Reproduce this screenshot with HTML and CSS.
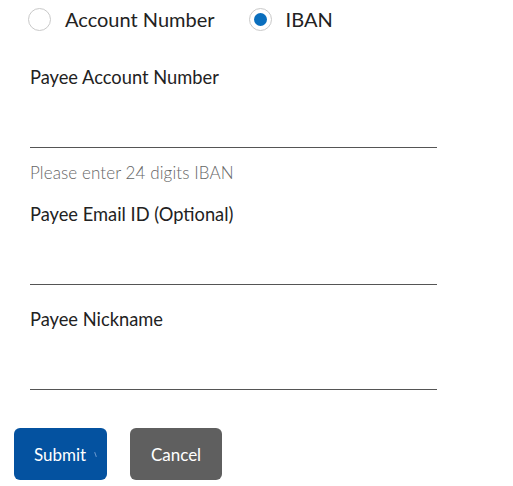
FILE: index.html
```html
<!DOCTYPE html>
<html lang="en">
<head>
<meta charset="utf-8">
<title>Add Payee</title>
<link rel="stylesheet" href="styles.css">
</head>
<body>
<form class="payee-form">
  <div class="radio-group">
    <label class="radio-option">
      <span class="radio"></span>
      <span class="radio-text">Account Number</span>
    </label>
    <label class="radio-option">
      <span class="radio radio-checked"><span class="radio-dot"></span></span>
      <span class="radio-text">IBAN</span>
    </label>
  </div>

  <div class="field field-first">
    <div class="field-label">Payee Account Number</div>
    <div class="field-input"></div>
    <div class="field-hint">Please enter 24 digits IBAN</div>
  </div>

  <div class="field field-second">
    <div class="field-label">Payee Email ID (Optional)</div>
    <div class="field-input"></div>
  </div>

  <div class="field field-third">
    <div class="field-label">Payee Nickname</div>
    <div class="field-input"></div>
  </div>

  <div class="actions">
    <button type="button" class="btn btn-primary">Submit<span class="btn-mark"></span></button>
    <button type="button" class="btn btn-secondary">Cancel</button>
  </div>
</form>
</body>
</html>
```

FILE: styles.css
```css
html, body {
  margin: 0;
  padding: 0;
  background: #ffffff;
}

body {
  font-family: Lato, "Open Sans", "Liberation Sans", sans-serif;
  color: #222222;
}

.payee-form {
  display: flex;
  flex-direction: column;
  padding: 7px 0 0 0;
}

.radio-group {
  display: flex;
  align-items: center;
  padding-left: 28px;
  gap: 34px;
  height: 24px;
}

.radio-option {
  display: flex;
  align-items: center;
  gap: 14px;
}

.radio {
  box-sizing: border-box;
  width: 23px;
  height: 23px;
  border: 1px solid #c9c9c9;
  border-radius: 50%;
  display: flex;
  align-items: center;
  justify-content: center;
  background: #fff;
}

.radio-dot {
  width: 13px;
  height: 13px;
  border-radius: 50%;
  background: #0a6ebd;
}

.radio-text {
  font-size: 20px;
  line-height: 24px;
  color: #222;
}

.field {
  display: flex;
  flex-direction: column;
  padding-left: 30px;
  width: 407px;
}

.field-first { margin-top: 35px; }
.field-second { margin-top: 20px; }
.field-third { margin-top: 23px; }

.field-label {
  font-size: 18.3px;
  line-height: 22px;
  color: #222;
}

.field-input {
  height: 59px;
  border-bottom: 1px solid #555555;
}

.field-hint {
  margin-top: 15px;
  font-size: 17px;
  line-height: 20px;
  font-weight: 300;
  color: #666666;
  letter-spacing: 0.1px;
}

.actions {
  display: flex;
  gap: 23px;
  padding-left: 14px;
  margin-top: 38px;
}

.btn {
  position: relative;
  height: 52px;
  border: none;
  border-radius: 6px;
  font-family: Lato, "Open Sans", "Liberation Sans", sans-serif;
  font-size: 17px;
  color: #ffffff;
  padding: 0;
}

.btn-primary {
  width: 93px;
  background: #0452a0;
  padding-right: 1px;
}

.btn-secondary {
  width: 92px;
  background: #5f5f5f;
}

.btn-mark {
  position: absolute;
  left: 81px;
  top: 24px;
  width: 1px;
  height: 5px;
  background: #6f9bd0;
  transform: rotate(-20deg);
}
```
